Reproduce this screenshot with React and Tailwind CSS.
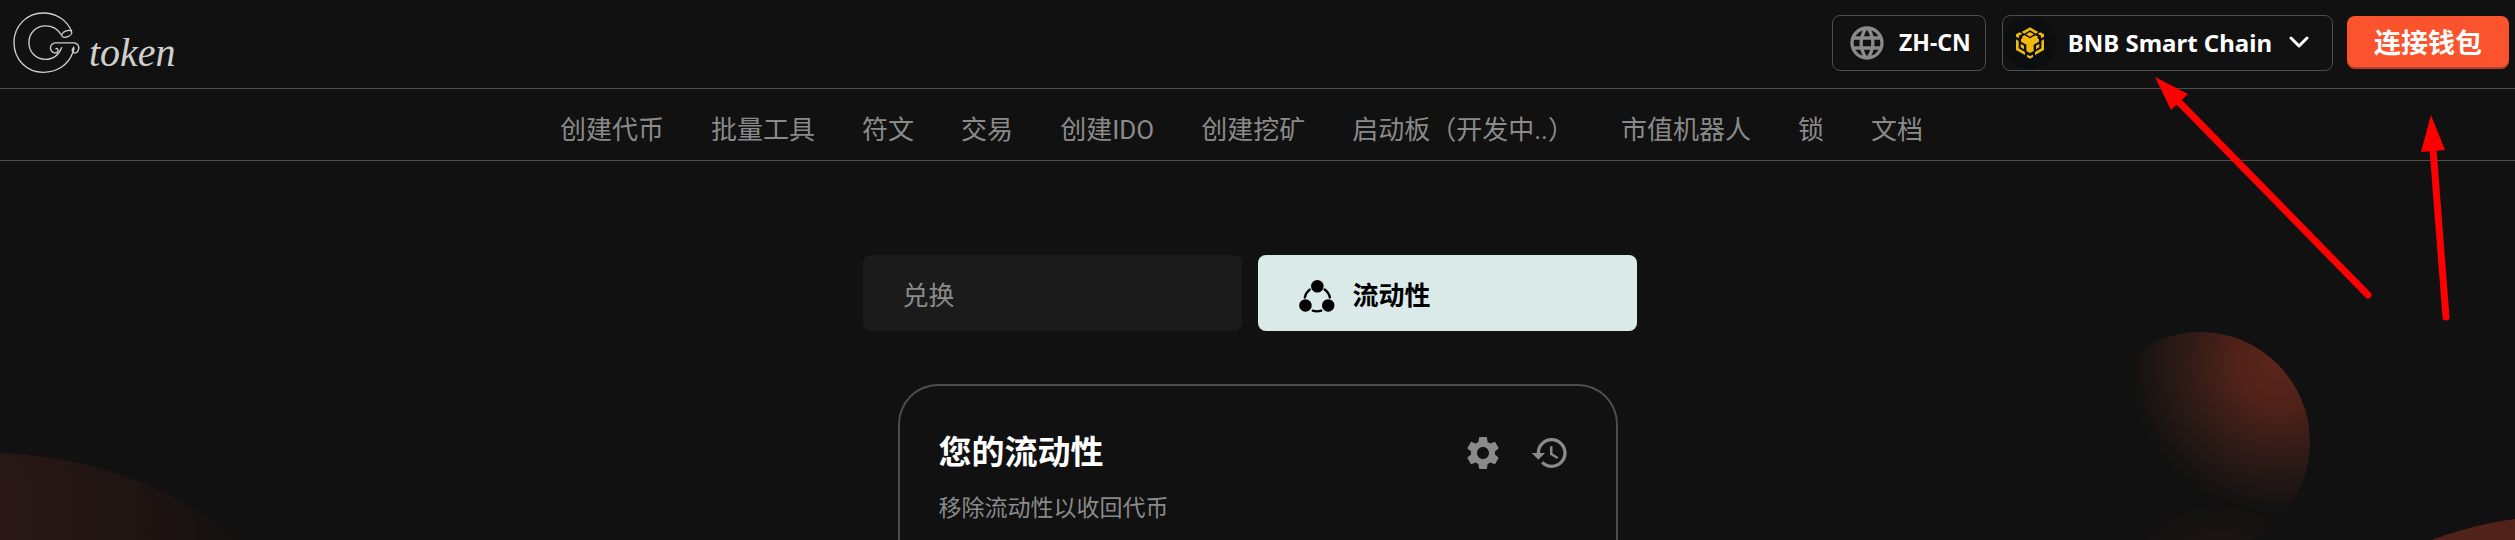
import React from "react";
import { MdLanguage, MdSettings, MdHistory } from "react-icons/md";

const NAV_ITEMS = [
  "创建代币",
  "批量工具",
  "符文",
  "交易",
  "创建IDO",
  "创建挖矿",
  "启动板（开发中..）",
  "市值机器人",
  "锁",
  "文档",
];

function Logo() {
  return (
    <a href="#" aria-label="G token" className="flex items-center text-[#cfcfcf]">
      <svg viewBox="38 30 208 194" className="h-[65px] w-[69px]" fill="none" stroke="currentColor" strokeWidth="4">
        <path d="M218 94C204 60 172 38 132 38C82 38 44 78 44 127C44 178 82 217 132 217C174 217 208 194 221 158" />
        <path d="M187 104C176 86 160 77 139 77C110 77 89 99 89 127C89 156 110 178 139 178C162 178 181 164 188 141" />
        <ellipse cx="203" cy="101" rx="16" ry="9" transform="rotate(-22 203 101)" />
        <path d="M166 128H226C236 130 240 138 239 147C237 157 229 161 223 157C217 153 219 144 226 143" />
        <path d="M166 128C156 131 152 140 155 149C158 158 168 161 175 156C180 151 176 143 169 146" />
        <path d="M221 158C225 150 226 144 222 140" />
      </svg>
      <span className="ml-2 mt-5 font-['Liberation_Serif',serif] text-[40px] italic leading-none">token</span>
    </a>
  );
}

function BnbLogo() {
  return (
    <span className="flex size-[52px] items-center justify-center rounded-full bg-[#0b0e11]">
      <svg viewBox="0 0 90 96" className="h-8 w-[30px]" fill="#f0b90b">
        <path d="M20 15L45 1L70 15L62 20L45 10L28 20Z" />
        <path d="M45 15L57 22L45 29L33 22Z" />
        <path d="M3 22L14 16L22 20L12 26V34L3 29Z" />
        <path d="M87 22L76 16L68 20L78 26V34L87 29Z" />
        <path d="M22 34V28L29 25L45 34L61 25L68 28V34L72 37V44L56 53V72L45 78L34 72V53L18 44V37Z" />
        <path d="M3 37L11 42V64L30 75V84L3 69Z" />
        <path d="M87 37L79 42V64L60 75V84L87 69Z" />
        <path d="M17 50L27 56V67L17 61Z" />
        <path d="M73 50L63 56V67L73 61Z" />
        <path d="M36 83L45 87L54 83V90L45 95L36 90Z" />
      </svg>
    </span>
  );
}

function PoolIcon() {
  return (
    <svg viewBox="0 0 108 100" className="h-[33px] w-9" fill="currentColor">
      <circle cx="55" cy="19" r="19" />
      <circle cx="19" cy="77" r="19" />
      <circle cx="88" cy="77" r="19" />
      <g fill="none" stroke="currentColor" strokeWidth="7" strokeLinecap="round">
        <path d="M32 29Q20 38 17 53" />
        <path d="M77 29Q90 38 93 53" />
        <path d="M41 93Q54 97 67 93" />
      </g>
    </svg>
  );
}

function Backdrop() {
  return (
    <div aria-hidden="true" className="pointer-events-none absolute inset-0 overflow-hidden">
      <div className="absolute -left-[412px] top-[453px] size-[804px] rounded-full bg-[radial-gradient(circle_at_340px_60px,#2f1915_0px,#281715_80px,#1d1412_230px,#111111_330px)]" />
      <div className="absolute right-[205px] top-[332px] size-[220px] rounded-full bg-[radial-gradient(circle_at_190px_30px,#5c251b_0px,#50221a_45px,#2c1a16_100px,#111111_152px,transparent_153px),radial-gradient(circle_at_130px_260px,#261814_0px,#111111_95px)]" />
      <div className="absolute -right-[412px] top-[516px] size-[730px] rounded-full bg-[#50221a]" />
    </div>
  );
}

function Arrows() {
  return (
    <svg
      aria-hidden="true"
      viewBox="0 0 310 250"
      className="pointer-events-none absolute right-[56px] top-[75px] h-[250px] w-[310px]"
      fill="#ff0000"
      stroke="#ff0000"
    >
      <path d="M27 24L219 220" strokeWidth="7" strokeLinecap="round" fill="none" />
      <path d="M6 2L39 19L22 35Z" stroke="none" />
      <path d="M284 74L297 242" strokeWidth="7" strokeLinecap="round" fill="none" />
      <path d="M282 40L296 75L272 77Z" stroke="none" />
    </svg>
  );
}

export default function App() {
  return (
    <div className="relative flex min-h-screen flex-col overflow-hidden bg-[#111111] font-[Roboto,'Noto_Sans_CJK_SC',sans-serif] text-[#8a8a8a]">
      <Backdrop />

      <header className="relative flex h-[89px] items-center justify-between border-b border-[#4d4d4d] pb-[3px] pl-3 pr-[6px]">
        <Logo />
        <div className="flex items-center font-['Noto_Sans','Noto_Sans_CJK_SC',sans-serif] font-bold text-white">
          <button type="button" className="flex h-14 items-center gap-3 rounded-lg border border-[#4d4d4d] px-[14px] text-[23px]">
            <MdLanguage className="size-10 text-[#8a8a8a]" />
            ZH-CN
          </button>
          <button type="button" className="ml-4 flex h-14 items-center rounded-lg border border-[#4d4d4d] pl-px pr-[23px] text-[24px]">
            <BnbLogo />
            <span className="ml-3">BNB Smart Chain</span>
            <svg viewBox="0 0 20 13" className="ml-[17px] h-[13px] w-5" fill="none" stroke="currentColor" strokeWidth="3" strokeLinecap="round" strokeLinejoin="round">
              <path d="M2 2L10 10L18 2" />
            </svg>
          </button>
          <button type="button" className="ml-[14px] h-[53px] rounded-lg bg-[#fb532d] px-[27px] pb-px text-[27px] leading-none shadow-[inset_0_-2px_0_rgba(14,14,44,0.3)]">
            连接钱包
          </button>
        </div>
      </header>

      <nav className="relative flex h-[72px] items-center justify-center gap-[47px] border-b border-[#4d4d4d] pr-8 pt-[10px]">
        {NAV_ITEMS.map((label) => (
          <a key={label} href="#" className="whitespace-nowrap text-[26px] leading-8">
            {label}
          </a>
        ))}
      </nav>

      <main className="relative flex flex-1 flex-col items-center pt-[94px]">
        <div className="flex gap-4 pr-4">
          <button type="button" className="flex h-[76px] w-[379px] items-center rounded-lg bg-[#1b1b1b] pl-10 pt-[6px] text-[26px]">
            兑换
          </button>
          <button type="button" className="flex h-[76px] w-[379px] items-center gap-[18px] rounded-lg bg-[#d9eae9] pl-[41px] pt-[6px] text-[26px] font-bold text-black">
            <PoolIcon />
            流动性
          </button>
        </div>

        <section className="mt-[53px] w-full max-w-[720px] flex-1 rounded-t-[40px] border-2 border-b-0 border-[#4d4d4d] bg-[#111111] pl-[39px] pr-[46px] pt-[46px]">
          <div className="flex items-center justify-between">
            <h1 className="pt-px text-[33px] font-bold leading-10 text-white">您的流动性</h1>
            <div className="flex gap-[27px]">
              <button type="button" aria-label="设置">
                <MdSettings className="size-10" />
              </button>
              <button type="button" aria-label="历史记录">
                <MdHistory className="size-10" />
              </button>
            </div>
          </div>
          <p className="mt-5 text-[23px] leading-8">移除流动性以收回代币</p>
        </section>
      </main>

      <Arrows />
    </div>
  );
}
